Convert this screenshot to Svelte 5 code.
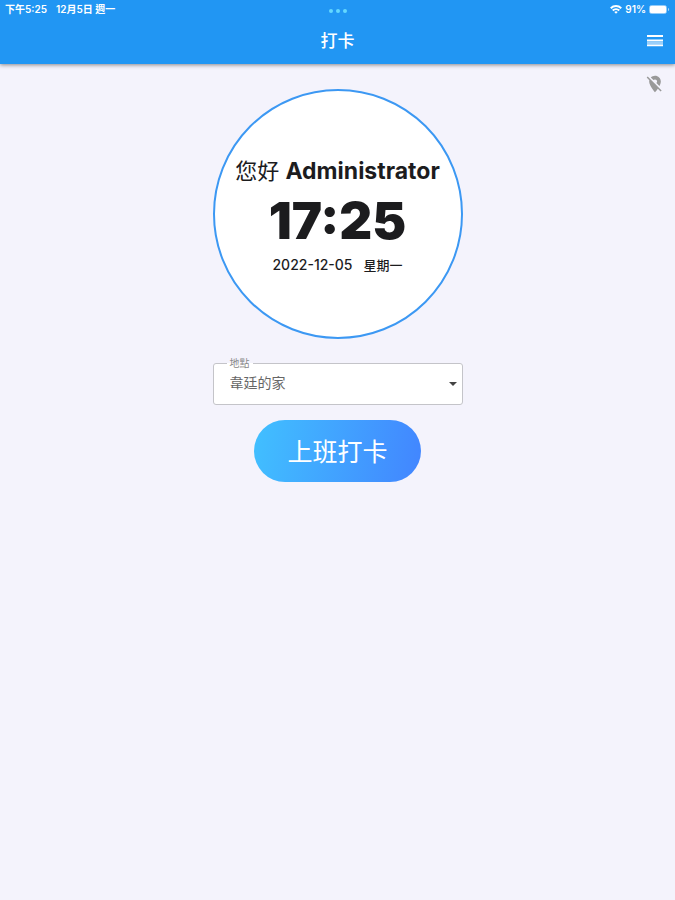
<script lang="ts">
  const user = 'Administrator';
  const time = '17:25';
  const date = '2022-12-05';
  const weekday = '星期一';
  const places = ['韋廷的家'];
  let place = $state(places[0]);
</script>

<div class="page">
  <header>
    <div class="status">
      <div class="left"><span>下午5:25</span><span>12月5日 週一</span></div>
      <div class="dots"><i></i><i></i><i></i></div>
      <div class="right">
        <svg width="12" height="9" viewBox="0 0 24 18" aria-hidden="true">
          <path d="M1.5 6.5C7.5.8 16.5.8 22.5 6.5" fill="none" stroke="#fff" stroke-width="4" />
          <path d="M5.5 11c3.700-3.600 9.300-3.600 13 0" fill="none" stroke="#fff" stroke-width="4" />
          <path d="M8.500 14c2-1.900 5-1.900 7 0L12 17.500z" fill="#fff" />
        </svg>
        <span>91%</span>
        <svg width="21" height="9" viewBox="0 0 21 9" aria-hidden="true">
          <rect x=".5" y=".5" width="17" height="8" rx="2" fill="none" stroke="#fff" stroke-opacity=".5" />
          <rect x="1" y="1" width="16" height="7" rx="1" fill="#fff" />
          <path d="M19 3v3c1.500-.5 1.500-2.500 0-3z" fill="#fff" fill-opacity=".6" />
        </svg>
      </div>
    </div>
    <div class="bar">
      <h1>打卡</h1>
      <button class="menu" aria-label="選單">
        <svg width="16" height="12" viewBox="0 0 16 12" aria-hidden="true">
          <path d="M0 1h16M0 5.500h16" stroke="#fff" stroke-width="2" />
          <path d="M0 7h16v4H0z" fill="#fff" fill-opacity=".55" />
          <path d="M0 10.500h16" stroke="#fff" stroke-width="1.500" />
        </svg>
      </button>
    </div>
  </header>

  <main>
    <div class="location">
      <svg width="20" height="20" viewBox="0 0 24 24" aria-hidden="true">
        <path fill="#999" d="M12 6.500c1.380 0 2.500 1.120 2.500 2.500 0 .74-.33 1.390-.83 1.850l3.630 3.630c.98-1.860 1.700-3.800 1.700-5.480 0-3.870-3.130-7-7-7-1.980 0-3.760.83-5.040 2.150l3.190 3.190c.46-.52 1.110-.84 1.850-.84zm4.370 9.600l-4.630-4.630-.11-.11L3.270 3 2 4.270l3.180 3.180C5.070 7.950 5 8.470 5 9c0 5.250 7 13 7 13s1.670-1.850 3.380-4.350L18.730 21 20 19.730l-3.630-3.630z" />
      </svg>
    </div>

    <section class="clock">
      <p class="hello">您好 <b>{user}</b></p>
      <p class="time">{time}</p>
      <p class="date"><span>{date}</span><span class="weekday">{weekday}</span></p>
    </section>

    <div class="field">
      <label for="place">地點</label>
      <select id="place" bind:value={place}>
        {#each places as p}
          <option value={p}>{p}</option>
        {/each}
      </select>
      <svg class="arrow" width="8" height="4" viewBox="0 0 8 4" aria-hidden="true">
        <path d="M0 0h8L4 4z" fill="#444" />
      </svg>
    </div>

    <button class="punch">上班打卡</button>
  </main>
</div>

<style>
  :global(body) { margin: 0; background: #f4f3fc; }
  .page { font-family: Inter, "Noto Sans CJK TC", sans-serif; color: #1c1c1e; }
  p, h1 { margin: 0; }
  button { border: 0; font-family: inherit; cursor: pointer; }
  header { background: #2196f3; color: #fff; box-shadow: 0 1px 4px rgba(0, 0, 0, .45); }

  .status { display: grid; grid-template-columns: 1fr auto 1fr; align-items: center; height: 18px; padding: 0 5px; font-size: 10px; line-height: 18px; font-weight: 600; }
  .left { display: flex; gap: 9px; }
  .dots { display: flex; gap: 3px; padding-top: 4px; }
  .dots i { width: 4px; height: 4px; border-radius: 50%; background: #64d8ff; }
  .right { display: flex; justify-content: flex-end; align-items: center; gap: 3px; }

  .bar { display: grid; grid-template-columns: 1fr auto 1fr; align-items: center; height: 46px; padding: 0 12px; }
  h1 { grid-column: 2; font-size: 17px; line-height: 24px; font-weight: 500; }
  .menu { justify-self: end; display: flex; padding: 0; background: none; }

  main { display: flex; flex-direction: column; align-items: center; }
  .location { align-self: flex-end; display: flex; height: 15px; padding: 10px 10px 0; }
  .location svg { flex: none; }

  .clock { box-sizing: border-box; display: flex; flex-direction: column; align-items: center; width: 250px; height: 250px; padding-top: 64px; border: 2px solid #3c98f3; border-radius: 50%; background: #fff; }
  .hello { font-size: 22px; line-height: 32px; white-space: nowrap; }
  .hello b { font-size: 23px; font-weight: 700; }
  .time { font-size: 51px; line-height: 68px; font-weight: 900; }
  .date { display: flex; gap: 11px; font-size: 14px; line-height: 20px; font-weight: 500; }
  .weekday { font-size: 13px; }

  .field { position: relative; width: 250px; margin-top: 24px; }
  .field label { position: absolute; top: -6px; left: 14px; padding: 0 3px; background: linear-gradient(#f4f3fc 50%, #fff 50%); color: #888; font-size: 10px; line-height: 12px; }
  select { box-sizing: border-box; display: block; width: 100%; height: 42px; padding: 0 28px 3px 16px; appearance: none; border: 1px solid #c4c4c9; border-radius: 3px; background: #fff; color: #666; font-family: inherit; font-size: 14px; }
  .arrow { position: absolute; top: 19px; right: 6px; pointer-events: none; }

  .punch { margin-top: 15px; padding: 14px 33px 11px; border-radius: 31px; background: linear-gradient(100deg, #41c0ff, #4285ff); color: #fff; font-size: 25px; line-height: 37px; }
</style>
